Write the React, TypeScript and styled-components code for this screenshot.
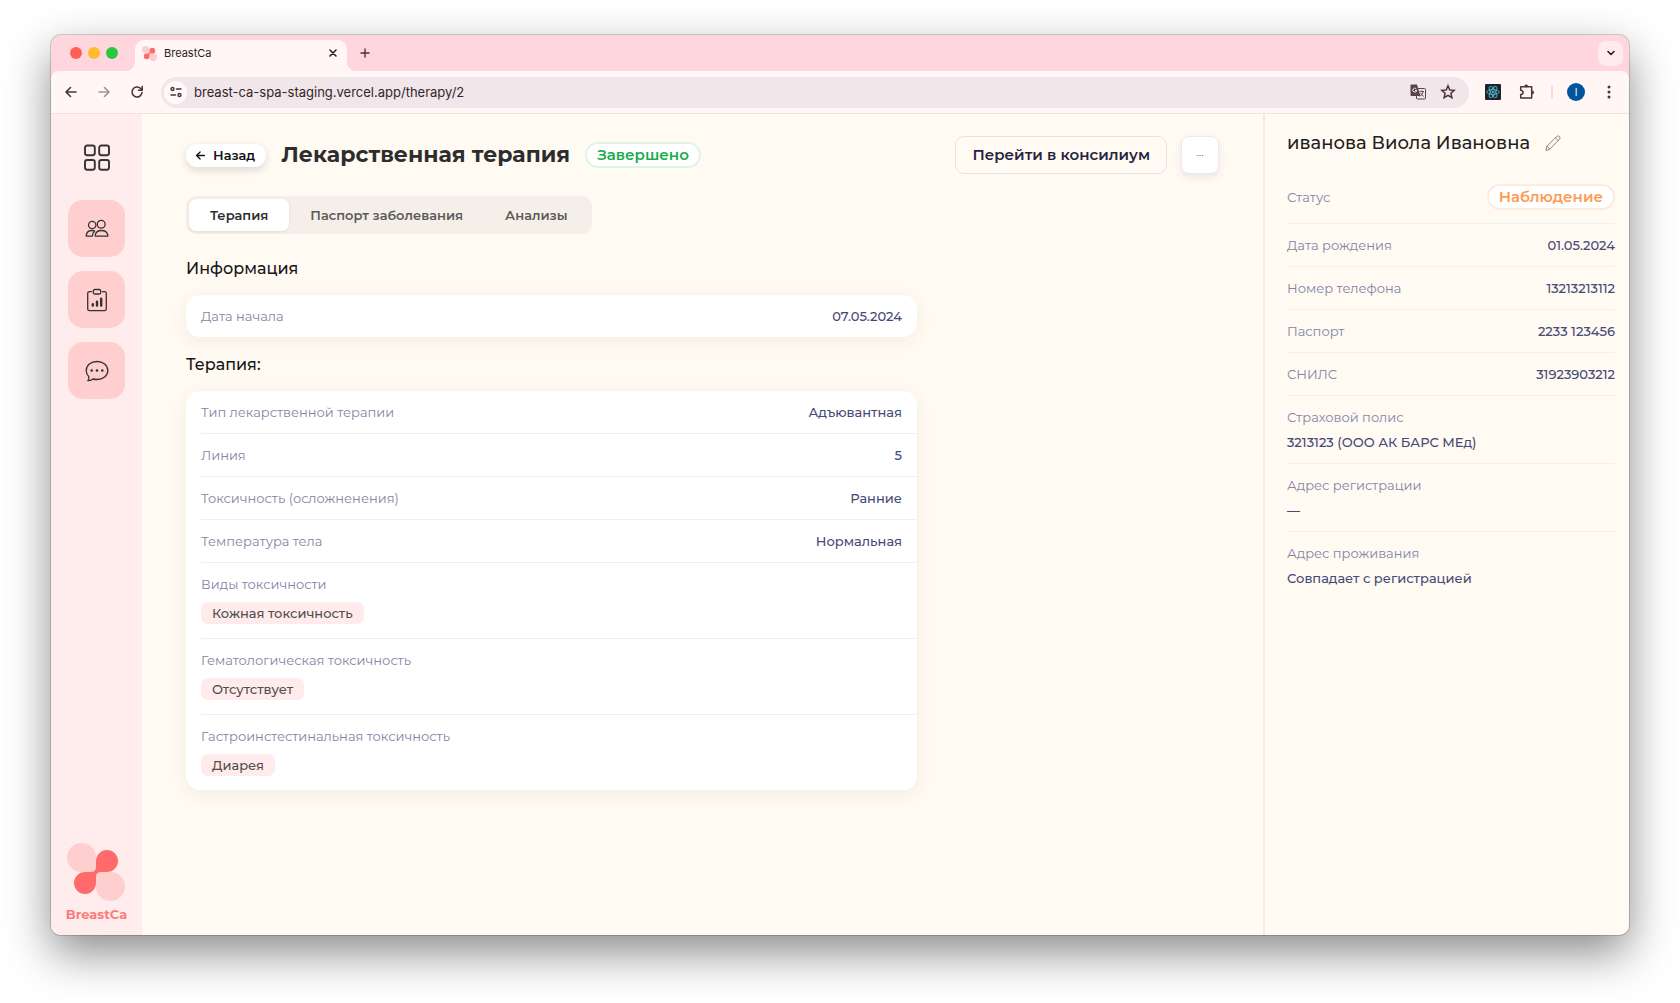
import React from "react";
import styled, { createGlobalStyle } from "styled-components";

const GlobalStyle = createGlobalStyle`
  *, *::before, *::after { box-sizing: border-box; }
  body {
    margin: 0;
    background: #ffffff;
    font-family: Montserrat, Inter, "Noto Sans", sans-serif;
    font-size: 13px;
    line-height: 18px;
    color: #1f1f1f;
  }
  button, input { font: inherit; color: inherit; }
  h1, h2, dl, dd, dt, p { margin: 0; }
`;

const Desktop = styled.div`
  display: flex;
  min-height: 100vh;
  padding: 35px 51px 68px;
`;

const BrowserWindow = styled.div`
  flex: 1;
  min-width: 0;
  display: flex;
  flex-direction: column;
  overflow: hidden;
  border-radius: 10px;
  background: #ffd6de;
  box-shadow: 0 0 0 1px rgba(0, 0, 0, 0.16), 0 18px 46px rgba(0, 0, 0, 0.46);
`;

const TabStrip = styled.div`
  display: flex;
  align-items: center;
  height: 36px;
  padding: 0 6px 0 19px;
  font-family: Inter, Roboto, sans-serif;
`;

const TrafficLights = styled.div`
  display: flex;
  gap: 6px;
  margin-right: 17px;
`;

const Light = styled.span<{ $color: string }>`
  width: 12px;
  height: 12px;
  border-radius: 50%;
  background: ${(p) => p.$color};
`;

const BrowserTab = styled.div`
  position: relative;
  align-self: flex-end;
  display: flex;
  align-items: center;
  gap: 7px;
  width: 212px;
  height: 31px;
  padding: 0 6px 5px 7px;
  border-radius: 9px 9px 0 0;
  background: #fff6f5;
  font-size: 11px;

  &::before,
  &::after {
    content: "";
    position: absolute;
    bottom: 0;
    width: 9px;
    height: 9px;
  }
  &::before {
    left: -9px;
    background: radial-gradient(circle at 0 0, transparent 9px, #fff6f5 9px);
  }
  &::after {
    right: -9px;
    background: radial-gradient(circle at 100% 0, transparent 9px, #fff6f5 9px);
  }
`;

const TabTitle = styled.span`
  flex: 1;
`;

const IconButton = styled.button<{ $size?: number; $faded?: boolean }>`
  flex: none;
  display: grid;
  place-items: center;
  width: ${(p) => p.$size ?? 20}px;
  height: ${(p) => p.$size ?? 20}px;
  padding: 0;
  border: 0;
  background: none;
  color: #4b3338;
  opacity: ${(p) => (p.$faded ? 0.5 : 1)};
`;

const NewTab = styled(IconButton)`
  margin-left: 8px;
`;

const TabSearch = styled(IconButton)`
  margin-left: auto;
  border-radius: 8px;
  background: #ffebee;
  color: #2a1a1d;
`;

const Toolbar = styled.div`
  display: flex;
  align-items: center;
  height: 43px;
  padding: 0 10px;
  border-bottom: 1px solid #f3dfe2;
  border-radius: 8px 8px 0 0;
  background: #fff6f5;
  font-family: Inter, Roboto, sans-serif;
`;

const NavButtons = styled.div`
  display: flex;
  gap: 13px;
  margin-right: 14px;
`;

const AddressBar = styled.div`
  flex: 1;
  display: flex;
  align-items: center;
  height: 31px;
  padding: 0 11px 0 3px;
  border-radius: 16px;
  background: #f1e6ea;
`;

const SiteInfo = styled(IconButton)`
  border-radius: 50%;
  background: #fff9f9;
  margin-right: 7px;
`;

const AddressInput = styled.input`
  flex: 1;
  min-width: 0;
  padding: 0;
  border: 0;
  outline: 0;
  background: none;
  color: #33272a;
  font-size: 13px;
`;

const AddressActions = styled.div`
  display: flex;
  gap: 10px;
`;

const ToolbarActions = styled.div`
  display: flex;
  align-items: center;
  gap: 14px;
  margin-left: 14px;
`;

const Divider = styled.span`
  width: 2px;
  height: 14px;
  background: #ffd6de;
`;

const Avatar = styled.button`
  width: 18px;
  height: 18px;
  padding: 0;
  border: 0;
  border-radius: 50%;
  background: #00559c;
  color: #ffffff;
  font-size: 10px;
  line-height: 18px;
`;

const Page = styled.div`
  flex: 1;
  display: flex;
  background: #fffaf2;
`;

const Sidebar = styled.nav`
  flex: none;
  display: flex;
  flex-direction: column;
  align-items: center;
  gap: 14px;
  width: 91px;
  padding: 15px 0 12px;
  background: #ffeded;
`;

const NavItem = styled.a<{ $filled?: boolean }>`
  display: grid;
  place-items: center;
  width: 57px;
  height: 57px;
  border-radius: 15px;
  background: ${(p) => (p.$filled ? "#ffcece" : "none")};
  color: #333333;
`;

const Brand = styled.a`
  display: flex;
  flex-direction: column;
  align-items: center;
  gap: 4px;
  margin-top: auto;
  color: #fb7c7c;
  font-size: 13px;
  font-weight: 700;
  text-decoration: none;
`;

const Main = styled.main`
  flex: 1;
  min-width: 0;
  padding: 22px 44px;
`;

const Header = styled.header`
  display: flex;
  align-items: center;
  height: 38px;
  margin-bottom: 22px;
`;

const BackLink = styled.a`
  display: flex;
  align-items: center;
  gap: 7px;
  height: 23px;
  padding: 0 11px 0 9px;
  border-radius: 12px;
  background: #ffffff;
  box-shadow: 0 3px 8px rgba(0, 0, 0, 0.14);
  color: #111111;
  font-weight: 600;
  text-decoration: none;
`;

const Title = styled.h1`
  margin: 0 15px;
  color: #2d2d2d;
  font-size: 22px;
  font-weight: 700;
  line-height: 30px;
  white-space: nowrap;
`;

const StatusBadge = styled.span<{ $tone: "green" | "orange" }>`
  display: flex;
  align-items: center;
  height: 26px;
  padding: 0 10px;
  border: 2px solid ${(p) => (p.$tone === "green" ? "#dff3e7" : "#ffeadf")};
  border-radius: 13px;
  background: #ffffff;
  color: ${(p) => (p.$tone === "green" ? "#17ad4d" : "#ff9a52")};
  font-size: 15px;
  font-weight: 600;
`;

const HeaderActions = styled.div`
  display: flex;
  gap: 14px;
  margin-left: auto;
`;

const OutlineButton = styled.button`
  height: 38px;
  padding: 0 16px;
  border: 1px solid #e2e3ea;
  border-radius: 9px;
  background: none;
  color: #23233f;
  font-size: 15px;
  font-weight: 600;
`;

const MoreButton = styled.button`
  width: 38px;
  height: 38px;
  padding: 0;
  border: 1px solid #eaeaee;
  border-radius: 8px;
  background: #ffffff;
  box-shadow: 0 4px 10px rgba(0, 0, 0, 0.08);
  color: #444444;
  font-size: 10px;
`;

const Tabs = styled.div`
  display: flex;
  width: fit-content;
  margin-bottom: 24px;
  padding: 3px;
  border-radius: 10px;
  background: #f4efe8;
`;

const TabButton = styled.button<{ $active?: boolean }>`
  height: 32px;
  padding: 0 21px;
  border: 0;
  border-radius: 7px;
  background: ${(p) => (p.$active ? "#ffffff" : "none")};
  box-shadow: ${(p) => (p.$active ? "0 1px 3px rgba(0, 0, 0, 0.08)" : "none")};
  color: ${(p) => (p.$active ? "#2d2d2d" : "#5c5a57")};
  font-weight: 600;
`;

const Section = styled.section`
  max-width: 731px;
  margin-bottom: 17px;
`;

const SectionTitle = styled.h2`
  margin-bottom: 15px;
  color: #151515;
  font-size: 16px;
  font-weight: 500;
  line-height: 22px;
`;

const Card = styled.dl`
  padding-left: 15px;
  border-radius: 14px;
  background: #ffffff;
  box-shadow: 0 4px 18px rgba(120, 80, 30, 0.08);
`;

const Field = styled.div`
  display: flex;
  align-items: center;
  justify-content: space-between;
  padding: 12px 15px 12px 0;
  border-bottom: 1px solid #f0f0f0;

  &:last-child {
    border-bottom: 0;
  }
`;

const TagField = styled(Field)`
  flex-direction: column;
  align-items: flex-start;
  gap: 9px;
  padding-bottom: 14px;
`;

const Label = styled.dt`
  color: #8385a5;
`;

const Value = styled.dd`
  color: #474a77;
  font-weight: 500;
`;

const Tag = styled.span`
  display: block;
  padding: 2px 11px;
  border-radius: 7px;
  background: #ffebeb;
  color: #4f4f4f;
  font-weight: 500;
`;

const Aside = styled.aside`
  flex: none;
  width: 366px;
  padding: 17px 14px 17px 22px;
  border-left: 2px solid #efece7;
`;

const PatientName = styled.h2`
  display: flex;
  align-items: center;
  gap: 14px;
  margin-bottom: 29px;
  color: #1f1f1f;
  font-size: 18px;
  font-weight: 500;
  line-height: 24px;
`;

const PatientField = styled(Field)<{ $stacked?: boolean }>`
  flex-direction: ${(p) => (p.$stacked ? "column" : "row")};
  align-items: ${(p) => (p.$stacked ? "flex-start" : "center")};
  gap: 7px;
  padding-right: 0;

  &:first-child {
    padding: 0 0 13px;
  }
`;

const BrandMark = ({ size }: { size: number }) => (
  <svg width={size} height={size} viewBox="0 0 58 58" aria-hidden="true">
    <path d="M29 14.500A14.500 14.500 0 1 0 14.500 29H26Q29 29 29 26Z" fill="#ffcece" />
    <path d="M29 43.500A14.500 14.500 0 1 0 43.500 29H32Q29 29 29 32Z" fill="#ffcece" />
    <path
      d="M29 18V24Q29 29 24 29H18A11 11 0 1 0 29 40V34Q29 29 34 29H40A11 11 0 1 0 29 18Z"
      fill="#ff6b6b"
    />
  </svg>
);

const stroke = {
  fill: "none",
  stroke: "currentColor",
  strokeLinecap: "round" as const,
  strokeLinejoin: "round" as const,
};

const ArrowIcon = ({ size = 14, flip = false, width = 1.6 }: { size?: number; flip?: boolean; width?: number }) => (
  <svg width={size} height={size} viewBox="0 0 14 14" {...stroke} strokeWidth={width}>
    <path d={flip ? "M2 7H12M7.500 2.500L12 7L7.500 11.500" : "M12 7H2M6.500 2.500L2 7L6.500 11.500"} />
  </svg>
);

const ReloadIcon = () => (
  <svg width="14" height="14" viewBox="0 0 14 14" {...stroke} strokeWidth="1.6">
    <path d="M12 7.500A5 5 0 1 1 10.600 3.500L12 5" />
    <path d="M12.200 1.500V5.200H8.500" />
  </svg>
);

const TuneIcon = () => (
  <svg width="12" height="12" viewBox="0 0 12 12" {...stroke} strokeWidth="1.4">
    <circle cx="2.500" cy="3" r="1.500" />
    <path d="M6.500 3H11M1 9H5.500" />
    <circle cx="9.500" cy="9" r="1.500" />
  </svg>
);

const CloseIcon = () => (
  <svg width="8" height="8" viewBox="0 0 8 8" {...stroke} stroke="#1f1f1f" strokeWidth="1.5">
    <path d="M1 1L7 7M7 1L1 7" />
  </svg>
);

const PlusIcon = () => (
  <svg width="10" height="10" viewBox="0 0 10 10" {...stroke} strokeWidth="1.4">
    <path d="M5 1V9M1 5H9" />
  </svg>
);

const ChevronIcon = () => (
  <svg width="8" height="6" viewBox="0 0 8 6" {...stroke} strokeWidth="1.6">
    <path d="M1 1.500L4 4.500L7 1.500" />
  </svg>
);

const TranslateIcon = () => (
  <svg width="16" height="16" viewBox="0 0 16 16">
    <rect x="6.500" y="4.500" width="9" height="10.500" rx="1" fill="none" stroke="#5a4449" />
    <path d="M1.500 0.500H7L10.500 12H1.500Q0.500 12 0.500 11V1.500Q0.500 0.500 1.500 0.500Z" fill="#5a4449" />
    <path d="M6.300 4.800A2 2 0 1 0 6.800 6.500H5" fill="none" stroke="#f1e6ea" />
    <path d="M9.500 7.500H14M11.700 6.500V7.500M13.300 7.500Q12.500 10.500 10 12.500M10.500 9Q12 11.500 13.800 12.500" fill="none" stroke="#5a4449" strokeWidth="0.900" />
  </svg>
);

const StarIcon = () => (
  <svg width="16" height="16" viewBox="0 0 16 16" {...stroke} strokeWidth="1.500" strokeLinejoin="miter">
    <path d="M8 1.800L9.800 6L14.300 6.300L10.900 9.300L11.900 13.700L8 11.400L4.100 13.700L5.100 9.300L1.700 6.300L6.200 6Z" />
  </svg>
);

const ReactIcon = () => (
  <svg width="16" height="16" viewBox="0 0 16 16">
    <rect width="16" height="16" rx="1" fill="#20232a" />
    <g fill="none" stroke="#4fb3cf" strokeWidth="0.900">
      <ellipse cx="8" cy="8" rx="6.200" ry="2.400" />
      <ellipse cx="8" cy="8" rx="6.200" ry="2.400" transform="rotate(60 8 8)" />
      <ellipse cx="8" cy="8" rx="6.200" ry="2.400" transform="rotate(120 8 8)" />
    </g>
    <circle cx="8" cy="8" r="1.200" fill="#4fb3cf" />
  </svg>
);

const PuzzleIcon = () => (
  <svg width="16" height="16" viewBox="0 0 16 16" {...stroke} strokeWidth="1.500">
    <path d="M1.700 2.800H12.700V14H1.700V10.600Q4 10.300 4 8.400T1.700 6.200Z" />
    <path d="M5.700 2.300A1.500 1.500 0 0 1 8.700 2.300ZM13.200 6.900A1.500 1.500 0 0 1 13.200 9.900Z" fill="currentColor" strokeWidth="0.800" />
  </svg>
);

const DotsIcon = () => (
  <svg width="4" height="14" viewBox="0 0 4 14" fill="currentColor">
    <circle cx="2" cy="2" r="1.500" />
    <circle cx="2" cy="7" r="1.500" />
    <circle cx="2" cy="12" r="1.500" />
  </svg>
);

const GridIcon = () => (
  <svg width="28" height="28" viewBox="0 0 28 28" {...stroke} strokeWidth="1.900">
    <rect x="2" y="1.500" width="9.800" height="9.800" rx="2.200" />
    <rect x="16.200" y="1.500" width="9.800" height="9.800" rx="2.200" />
    <rect x="2" y="16" width="9.800" height="9.800" rx="2.200" />
    <rect x="16.200" y="16" width="9.800" height="9.800" rx="2.200" />
  </svg>
);

const PeopleIcon = () => (
  <svg width="24" height="24" viewBox="0 0 24 24" {...stroke} strokeWidth="1.300">
    <circle cx="7.200" cy="8" r="3.700" />
    <circle cx="16.200" cy="7.200" r="3.900" />
    <path d="M10.600 19.200H22.400Q23 19.200 22.800 18.200C22.200 15 19.800 13.500 16.500 13.500S10.800 15 10.200 18.200Q10 19.200 10.600 19.200Z" />
    <path d="M7.300 19.200H1.700Q1.100 19.200 1.200 18.400C1.700 15.200 4 13.500 7 13.500Q8.600 13.500 9.700 14Q7.600 16 7.300 19.200Z" />
  </svg>
);

const ReportIcon = () => (
  <svg width="24" height="24" viewBox="0 0 24 24" {...stroke} strokeWidth="1.300">
    <path d="M6.500 3.700H4.500Q2.700 3.700 2.700 5.500V21Q2.700 22.700 4.500 22.700H19.500Q21.300 22.700 21.300 21V5.500Q21.300 3.700 19.500 3.700H17.500" />
    <rect x="8.300" y="1.500" width="7.400" height="4.500" rx="1.500" />
    <path d="M7.800 16.200V17.600M12 13.700V17.600M16.200 10.800V17.600" strokeWidth="2.400" />
  </svg>
);

const ChatIcon = () => (
  <svg width="24" height="24" viewBox="0 0 24 24" {...stroke} strokeWidth="1.300">
    <path d="M3.800 17.500C2 15.800 1.200 13.800 1.200 11.500C1.200 6.200 6 2.500 12 2.500S22.800 6.200 22.800 11.500S18 20.500 12 20.500Q9.800 20.500 8 20C6.500 21.200 4.600 21.800 2.800 21.700Q4.300 20 3.800 17.500Z" />
    <g fill="currentColor" stroke="none">
      <circle cx="6.700" cy="11.500" r="1.300" />
      <circle cx="12" cy="11.500" r="1.300" />
      <circle cx="17.300" cy="11.500" r="1.300" />
    </g>
  </svg>
);

const PencilIcon = () => (
  <svg width="16" height="16" viewBox="0 0 16 16" {...stroke} stroke="#7d7a75" strokeWidth="0.900">
    <path d="M1 15L2 11.200L11.500 1.700Q12.500 0.700 13.700 1.100L14.700 1.800Q15.500 3.300 14.300 4.500L4.800 14Z" />
    <path d="M10.500 2.700L13.300 5.500M2 11.200L4.800 14" />
  </svg>
);

const therapyFields = [
  ["Тип лекарственной терапии", "Адъювантная"],
  ["Линия", "5"],
  ["Токсичность (осложненения)", "Ранние"],
  ["Температура тела", "Нормальная"],
];

const toxicityFields = [
  ["Виды токсичности", "Кожная токсичность"],
  ["Гематологическая токсичность", "Отсутствует"],
  ["Гастроинстестинальная токсичность", "Диарея"],
];

const patientFields: { label: string; value: string; stacked?: boolean }[] = [
  { label: "Дата рождения", value: "01.05.2024" },
  { label: "Номер телефона", value: "13213213112" },
  { label: "Паспорт", value: "2233 123456" },
  { label: "СНИЛС", value: "31923903212" },
  { label: "Страховой полис", value: "3213123 (ООО АК БАРС МЕд)", stacked: true },
  { label: "Адрес регистрации", value: "—", stacked: true },
  { label: "Адрес проживания", value: "Совпадает с регистрацией", stacked: true },
];

const tabs = ["Терапия", "Паспорт заболевания", "Анализы"];

export default function App() {
  const [activeTab, setActiveTab] = React.useState(tabs[0]);

  return (
    <>
      <GlobalStyle />
      <Desktop>
        <BrowserWindow>
          <TabStrip>
            <TrafficLights>
              <Light $color="#ff5f57" />
              <Light $color="#febc2e" />
              <Light $color="#28c840" />
            </TrafficLights>
            <BrowserTab>
              <BrandMark size={15} />
              <TabTitle>BreastCa</TabTitle>
              <IconButton $size={16} aria-label="Закрыть вкладку">
                <CloseIcon />
              </IconButton>
            </BrowserTab>
            <NewTab aria-label="Новая вкладка">
              <PlusIcon />
            </NewTab>
            <TabSearch $size={25} aria-label="Поиск вкладок">
              <ChevronIcon />
            </TabSearch>
          </TabStrip>

          <Toolbar>
            <NavButtons>
              <IconButton aria-label="Назад">
                <ArrowIcon />
              </IconButton>
              <IconButton $faded aria-label="Вперёд">
                <ArrowIcon flip />
              </IconButton>
              <IconButton aria-label="Обновить">
                <ReloadIcon />
              </IconButton>
            </NavButtons>
            <AddressBar>
              <SiteInfo $size={23} aria-label="Сведения о сайте">
                <TuneIcon />
              </SiteInfo>
              <AddressInput aria-label="Адрес" defaultValue="breast-ca-spa-staging.vercel.app/therapy/2" />
              <AddressActions>
                <IconButton aria-label="Перевести">
                  <TranslateIcon />
                </IconButton>
                <IconButton aria-label="В закладки">
                  <StarIcon />
                </IconButton>
              </AddressActions>
            </AddressBar>
            <ToolbarActions>
              <IconButton aria-label="React Developer Tools">
                <ReactIcon />
              </IconButton>
              <IconButton aria-label="Расширения">
                <PuzzleIcon />
              </IconButton>
              <Divider />
              <Avatar>I</Avatar>
              <IconButton aria-label="Меню">
                <DotsIcon />
              </IconButton>
            </ToolbarActions>
          </Toolbar>

          <Page>
            <Sidebar>
              <NavItem href="#" aria-label="Главная">
                <GridIcon />
              </NavItem>
              <NavItem href="#" $filled aria-label="Пациенты">
                <PeopleIcon />
              </NavItem>
              <NavItem href="#" $filled aria-label="Отчёты">
                <ReportIcon />
              </NavItem>
              <NavItem href="#" $filled aria-label="Сообщения">
                <ChatIcon />
              </NavItem>
              <Brand href="#">
                <BrandMark size={58} />
                BreastCa
              </Brand>
            </Sidebar>

            <Main>
              <Header>
                <BackLink href="#">
                  <ArrowIcon size={11} />
                  Назад
                </BackLink>
                <Title>Лекарственная терапия</Title>
                <StatusBadge $tone="green">Завершено</StatusBadge>
                <HeaderActions>
                  <OutlineButton>Перейти в консилиум</OutlineButton>
                  <MoreButton aria-label="Ещё">···</MoreButton>
                </HeaderActions>
              </Header>

              <Tabs role="tablist">
                {tabs.map((tab) => (
                  <TabButton
                    key={tab}
                    role="tab"
                    aria-selected={tab === activeTab}
                    $active={tab === activeTab}
                    onClick={() => setActiveTab(tab)}
                  >
                    {tab}
                  </TabButton>
                ))}
              </Tabs>

              <Section>
                <SectionTitle>Информация</SectionTitle>
                <Card>
                  <Field>
                    <Label>Дата начала</Label>
                    <Value>07.05.2024</Value>
                  </Field>
                </Card>
              </Section>

              <Section>
                <SectionTitle>Терапия:</SectionTitle>
                <Card>
                  {therapyFields.map(([label, value]) => (
                    <Field key={label}>
                      <Label>{label}</Label>
                      <Value>{value}</Value>
                    </Field>
                  ))}
                  {toxicityFields.map(([label, value]) => (
                    <TagField key={label}>
                      <Label>{label}</Label>
                      <Value>
                        <Tag>{value}</Tag>
                      </Value>
                    </TagField>
                  ))}
                </Card>
              </Section>
            </Main>

            <Aside>
              <PatientName>
                иванова Виола Ивановна
                <IconButton $size={18} aria-label="Редактировать">
                  <PencilIcon />
                </IconButton>
              </PatientName>
              <dl>
                <PatientField>
                  <Label>Статус</Label>
                  <Value>
                    <StatusBadge $tone="orange">Наблюдение</StatusBadge>
                  </Value>
                </PatientField>
                {patientFields.map(({ label, value, stacked }) => (
                  <PatientField key={label} $stacked={stacked}>
                    <Label>{label}</Label>
                    <Value>{value}</Value>
                  </PatientField>
                ))}
              </dl>
            </Aside>
          </Page>
        </BrowserWindow>
      </Desktop>
    </>
  );
}
